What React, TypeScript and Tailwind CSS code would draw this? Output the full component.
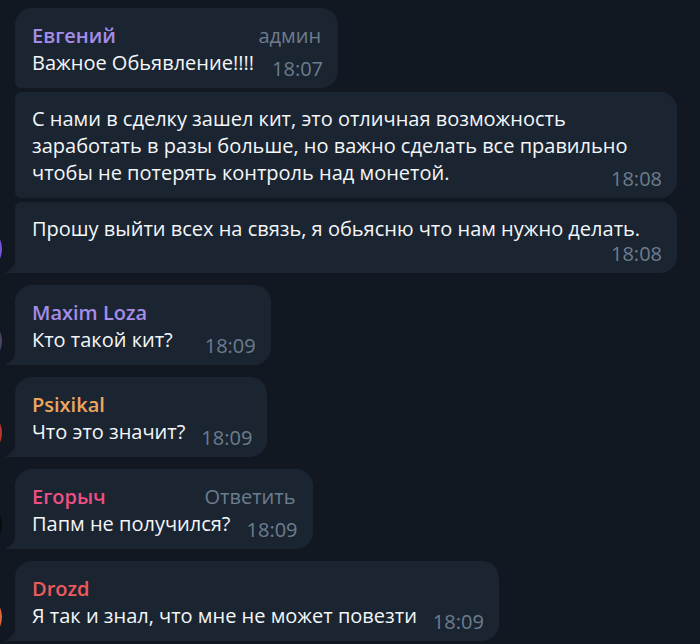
import React from "react";

type Msg = {
  text: React.ReactNode;
  time: string;
  wide?: boolean;
  timeBelow?: boolean;
  spacer?: number;
};

type Group = {
  name: string;
  nameColor: string;
  avatar: string;
  label?: string;
  messages: Msg[];
};

const GROUPS: Group[] = [
  {
    name: "Евгений",
    nameColor: "text-[#a68ce9]",
    avatar: "bg-[#7a55d9]",
    label: "админ",
    messages: [
      { text: "Важное Обьявление!!!!", time: "18:07", spacer: 67 },
      {
        text: (
          <>
            С нами в сделку зашел кит, это отличная возможность
            <br />
            заработать в разы больше, но важно сделать все правильно
            <br />
            чтобы не потерять контроль над монетой.
          </>
        ),
        time: "18:08",
        wide: true,
      },
      {
        text: "Прошу выйти всех на связь, я обьясню что нам нужно делать.",
        time: "18:08",
        wide: true,
        timeBelow: true,
      },
    ],
  },
  {
    name: "Maxim Loza",
    nameColor: "text-[#a68ce9]",
    avatar: "bg-[#4b4368]",
    messages: [{ text: "Кто такой кит?", time: "18:09", spacer: 81 }],
  },
  {
    name: "Psixikal",
    nameColor: "text-[#f0a55e]",
    avatar: "bg-[#b8372e]",
    messages: [{ text: "Что это значит?", time: "18:09" }],
  },
  {
    name: "Егорыч",
    nameColor: "text-[#ee4f82]",
    avatar: "bg-[#0b0b0d]",
    label: "Ответить",
    messages: [{ text: "Папм не получился?", time: "18:09" }],
  },
  {
    name: "Drozd",
    nameColor: "text-[#ec5a5c]",
    avatar: "bg-[#e0653c]",
    messages: [{ text: "Я так и знал, что мне не может повезти", time: "18:09" }],
  },
];

const Tail = () => (
  <svg
    className="absolute left-[-10px] bottom-0"
    width="11"
    height="18"
    viewBox="0 0 11 18"
  >
    <path d="M11 0 C11 8 8 14 1.5 16.6 C0 17.2 0.3 18 1.5 18 H11 Z" fill="#1b2532" />
  </svg>
);

const Bubble: React.FC<{ group: Group; msg: Msg; index: number; count: number }> = ({
  group,
  msg,
  index,
  count,
}) => {
  const first = index === 0;
  const last = index === count - 1;
  const corners = [
    "rounded-[17px]",
    first ? "" : "rounded-tl-[6px]",
    last ? "rounded-bl-none" : "rounded-bl-[6px]",
  ].join(" ");

  return (
    <div
      className={`relative bg-[#1b2532] px-[17px] pb-[12px] ${
        first ? "pt-[14.5px]" : "pt-[13px]"
      } ${msg.wide ? "w-[662px]" : "w-fit"} ${corners}`}
    >
      {first && (
        <div className="flex justify-between gap-10 leading-[26px]">
          <span className={`font-semibold ${group.nameColor}`}>{group.name}</span>
          {group.label && <span className="text-[#6c7d8d]">{group.label}</span>}
        </div>
      )}
      <div className="leading-[27px] text-[#f4f6f8]">
        {msg.text}
        {!msg.timeBelow && (
          <span className="inline-block" style={{ width: msg.spacer ?? 65 }} />
        )}
      </div>
      {msg.timeBelow && <div className="h-[19px]" />}
      <span className="absolute right-[15px] bottom-[9px] leading-[20px] text-[#6c7d8d]">
        {msg.time}
      </span>
      {last && <Tail />}
    </div>
  );
};

export default function App() {
  return (
    <div
      className="h-[644px] w-[700px] overflow-hidden bg-[#111821] pt-[8px] text-[20px]"
      style={{ fontFamily: '"Open Sans", "Noto Sans", sans-serif' }}
    >
      <div className="flex flex-col gap-[12.5px]">
        {GROUPS.map((g) => (
          <div key={g.name} className="flex items-end gap-[13px]">
            <div className={`-ml-[46px] h-12 w-12 shrink-0 rounded-full ${g.avatar}`} />
            <div className="flex flex-col gap-[4px]">
              {g.messages.map((m, i) => (
                <Bubble key={i} group={g} msg={m} index={i} count={g.messages.length} />
              ))}
            </div>
          </div>
        ))}
      </div>
    </div>
  );
}
